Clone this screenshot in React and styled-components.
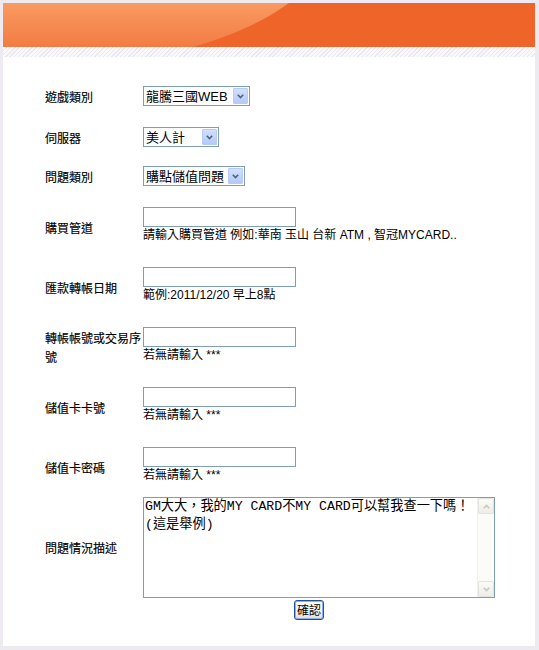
import React from "react";
import styled, { createGlobalStyle } from "styled-components";

const GlobalStyle = createGlobalStyle`
  html, body {
    margin: 0;
    padding: 0;
    background: #edebf1;
  }
  body {
    font-family: "Liberation Sans", "Noto Sans CJK TC", sans-serif;
    font-size: 12px;
    color: #000;
  }
`;

const Panel = styled.div`
  margin: 3px 4px 4px 3px;
  width: 532px;
  background: #fff;
  padding-bottom: 26px;
`;

const Banner = styled.div`
  height: 44px;
  background:
    radial-gradient(ellipse 324px 129px at 0px -60px, transparent 0, transparent 99.4%, #ee6429 100%),
    linear-gradient(#f99a62, #f27c43);
`;

const Stripe = styled.div`
  height: 10px;
  background: repeating-linear-gradient(
    -45deg,
    #f9f8fb 0 2px,
    #ebe7f0 2px 3px
  );
`;

const Form = styled.form`
  padding: 29px 0 0 42px;
  display: flex;
  flex-direction: column;
`;

const Row = styled.div`
  display: flex;
  align-items: center;
  margin-top: ${p => p.$top || 0}px;
`;

const Label = styled.div`
  width: 98px;
  flex: none;
  font-size: 12px;
  line-height: 19px;
  font-family: "Noto Sans CJK TC", "Liberation Sans", sans-serif;
  -webkit-text-stroke: 0.15px #000;
`;

const Field = styled.div`
  display: flex;
  flex-direction: column;
  align-items: flex-start;
`;

const SelectBox = styled.div`
  position: relative;
  width: ${p => p.$w}px;
  height: 20px;
`;

const Select = styled.select`
  appearance: none;
  -webkit-appearance: none;
  box-sizing: border-box;
  width: 100%;
  height: 20px;
  margin: 0;
  padding: 0 0 0 2px;
  border: 1px solid #7f9db9;
  border-radius: 0;
  background: #fff;
  font-family: "Liberation Sans", "Noto Sans CJK TC", sans-serif;
  font-size: 13px;
  color: #000;
  outline: none;
`;

const DropButton = styled.span`
  position: absolute;
  right: 2px;
  top: 2px;
  width: 15px;
  height: 16px;
  box-sizing: border-box;
  border: 1px solid #b8cbf5;
  border-radius: 1px;
  background: linear-gradient(#d2e0fd, #b5c9f7);
  display: flex;
  align-items: center;
  justify-content: center;
  pointer-events: none;
`;

const TextInput = styled.input`
  box-sizing: border-box;
  width: 153px;
  height: 20px;
  margin: 0;
  padding: 1px 2px;
  border: 1px solid #7f9db9;
  font-size: 12px;
  font-family: "Liberation Sans", "Noto Sans CJK TC", sans-serif;
  outline: none;
`;

const Hint = styled.div`
  line-height: 17px;
  margin-bottom: 3px;
  white-space: nowrap;
  font-family: "Liberation Sans", "Noto Sans CJK TC", sans-serif;
`;

const TextBox = styled.div`
  box-sizing: border-box;
  width: 352px;
  height: 101px;
  border: 1px solid #7f9db9;
  display: flex;
  background: #fff;
`;

const TextArea = styled.textarea`
  flex: 1;
  min-width: 0;
  height: 100%;
  box-sizing: border-box;
  margin: 0;
  padding: 0 0 0 1px;
  border: none;
  resize: none;
  overflow: hidden;
  font-family: "Liberation Mono", "Noto Sans CJK TC", monospace;
  font-size: 13.2px;
  line-height: 18px;
  color: #000;
  outline: none;
`;

const ScrollTrack = styled.div`
  width: 16px;
  flex: none;
  display: flex;
  flex-direction: column;
  justify-content: space-between;
  background: #fbfbf8;
  border-left: 1px solid #f1f0ea;
`;

const ScrollButton = styled.div`
  height: 16px;
  box-sizing: border-box;
  border: 1px solid #e3e2db;
  border-radius: 2px;
  background: linear-gradient(#fbfbf8, #eeede6);
  display: flex;
  align-items: center;
  justify-content: center;
`;

const ButtonRow = styled.div`
  margin-top: 2px;
  padding-left: 249px;
`;

const Submit = styled.button`
  height: 20px;
  margin: 0;
  padding: 0 2px;
  border: 1px solid #1f4f96;
  border-radius: 3px;
  background: linear-gradient(#ffffff, #f1f0ea 70%, #dcdad0);
  box-shadow: inset 0 0 0 1px #8eb1ee;
  font-family: "Noto Sans CJK TC", sans-serif;
  font-size: 12px;
  line-height: 16px;
  color: #000;
`;

const Chevron = ({ up, color = "#4d6185" }) => (
  <svg width="7" height="5" viewBox="0 0 7 5">
    <path
      d={up ? "M0.8 4.2 L3.5 1.4 L6.2 4.2" : "M0.8 0.8 L3.5 3.6 L6.2 0.8"}
      fill="none"
      stroke={color}
      strokeWidth="1.6"
    />
  </svg>
);

const Dropdown = ({ width, options }) => (
  <SelectBox $w={width}>
    <Select defaultValue={options[0]}>
      {options.map(o => (
        <option key={o}>{o}</option>
      ))}
    </Select>
    <DropButton>
      <Chevron />
    </DropButton>
  </SelectBox>
);

const inputRows = [
  { label: "購買管道", hint: "請輸入購買管道 例如:華南 玉山 台新 ATM , 智冠MYCARD..", top: 21 },
  { label: "匯款轉帳日期", hint: "範例:2011/12/20 早上8點", top: 20 },
  { label: "轉帳帳號或交易序號", hint: "若無請輸入 ***", top: 20 },
  { label: "儲值卡卡號", hint: "若無請輸入 ***", top: 20 },
  { label: "儲值卡密碼", hint: "若無請輸入 ***", top: 20 }
];

export default function App() {
  return (
    <>
      <GlobalStyle />
      <Panel>
        <Banner />
        <Stripe />
        <Form onSubmit={e => e.preventDefault()}>
          <Row>
            <Label>遊戲類別</Label>
            <Dropdown width={107} options={["龍騰三國WEB"]} />
          </Row>
          <Row $top={21}>
            <Label>伺服器</Label>
            <Dropdown width={76} options={["美人計"]} />
          </Row>
          <Row $top={19}>
            <Label>問題類別</Label>
            <Dropdown width={102} options={["購點儲值問題"]} />
          </Row>
          {inputRows.map(r => (
            <Row key={r.label} $top={r.top}>
              <Label>{r.label}</Label>
              <Field>
                <TextInput type="text" />
                <Hint>{r.hint}</Hint>
              </Field>
            </Row>
          ))}
          <Row $top={10}>
            <Label>問題情況描述</Label>
            <TextBox>
              <TextArea
                defaultValue={"GM大大，我的MY CARD不MY CARD可以幫我查一下嗎！\n(這是舉例)"}
              />
              <ScrollTrack>
                <ScrollButton>
                  <Chevron up color="#c6c6c2" />
                </ScrollButton>
                <ScrollButton>
                  <Chevron color="#c6c6c2" />
                </ScrollButton>
              </ScrollTrack>
            </TextBox>
          </Row>
          <ButtonRow>
            <Submit type="submit">確認</Submit>
          </ButtonRow>
        </Form>
      </Panel>
    </>
  );
}
